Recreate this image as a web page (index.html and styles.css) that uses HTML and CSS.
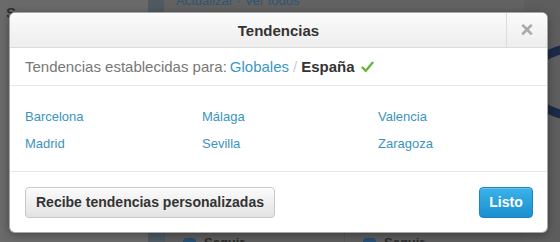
FILE: index.html
```
<!DOCTYPE html>
<html lang="es">
<head>
  <meta charset="UTF-8">
  <meta name="viewport" content="width=device-width,initial-scale=1">
  <title>Tendencias</title>
  <link rel="stylesheet" href="styles.css">
</head>
<body>

  <div class="page">
    <div class="side"><span class="side-mark">S</span></div>
    <div class="strip"></div>
    <div class="main">
      <div class="main-top">Actualizar · Ver todos</div>
      <div class="follow-row">
        <div class="follow-btn"><span class="bird"></span>Seguir</div>
        <div class="follow-btn"><span class="bird"></span>Seguir</div>
      </div>
    </div>
    <div class="aside">
      <div class="avatar"></div>
      <div class="aside-name">Ho</div>
      <div class="aside-sub">arl</div>
    </div>
  </div>

  <div class="modal">
    <div class="modal-header">
      <div></div>
      <div class="modal-title">Tendencias</div>
      <div class="modal-close">&times;</div>
    </div>

    <div class="modal-sub">
      Tendencias establecidas para:
      <a class="link" href="#">Globales</a>
      <span class="sep">/</span>
      <strong class="current">España</strong>
      <svg class="check" width="13" height="12" viewBox="0 0 13 12">
        <path d="M1.5 6.5 L4.8 9.8 L11.5 1.8" fill="none" stroke="#6bb33e" stroke-width="2.4" stroke-linecap="round" stroke-linejoin="round"/>
      </svg>
    </div>

    <div class="modal-body">
      <ul class="cities">
        <li><a href="#">Barcelona</a></li>
        <li><a href="#">Málaga</a></li>
        <li><a href="#">Valencia</a></li>
        <li><a href="#">Madrid</a></li>
        <li><a href="#">Sevilla</a></li>
        <li><a href="#">Zaragoza</a></li>
      </ul>
    </div>

    <div class="modal-footer">
      <button class="btn">Recibe tendencias personalizadas</button>
      <button class="btn primary">Listo</button>
    </div>
  </div>

</body>
</html>
```

FILE: styles.css
```
* { box-sizing: border-box; }

html, body {
  margin: 0;
  height: 242px;
  overflow: hidden;
}
body {
  background-color: #626262;
  font-family: 'Liberation Sans', Arial, sans-serif;
  color: #333;
}

/* dimmed page behind the dialog */
.page {
  display: grid;
  grid-template-columns: 148px 16px 1fr 52px;
  height: 242px;
}
.side {
  background-color: #6a6a6a;
  padding: 4px 0 0 6px;
}
.side-mark {
  font-weight: 700;
  font-size: 15px;
  color: #2e2e2e;
}
.strip { background-color: #4f5a63; }
.main {
  display: flex;
  flex-direction: column;
  justify-content: space-between;
  padding-left: 12px;
}
.main-top {
  margin-top: -7px;
  font-size: 13px;
  color: #2c5670;
}
.follow-row {
  display: flex;
  height: 10px;
  border-top: 1px solid #7a7a7a;
  margin-left: -12px;
}
.follow-btn {
  width: 180px;
  padding: 2px 0 0 18px;
  border-left: 1px solid #555;
  font-size: 13px;
  font-weight: 700;
  color: #2a2a2a;
  background-color: #5d5d5d;
}
.bird {
  display: inline-block;
  width: 13px;
  height: 9px;
  margin-right: 8px;
  border-radius: 6px 6px 2px 8px;
  background-color: #264f72;
}
.aside {
  background-color: #5e5e5e;
  padding-top: 44px;
}
.avatar {
  width: 100px;
  height: 76px;
  border: 9px solid #1d2a48;
  border-radius: 50%;
}
.aside-name {
  margin-top: 62px;
  font-size: 14px;
  font-weight: 700;
  color: #222;
}
.aside-sub {
  font-size: 11px;
  color: #444;
}

/* dialog */
.modal {
  position: absolute;
  top: 12px;
  left: 9px;
  width: 539px;
  background-color: #fff;
  border: 1px solid rgba(0, 0, 0, .35);
  border-radius: 6px;
  box-shadow: 0 2px 8px rgba(0, 0, 0, .35);
  overflow: hidden;
}
.modal-header {
  display: grid;
  grid-template-columns: 41px 1fr 41px;
  height: 35px;
  background: linear-gradient(#fbfbfb, #ededed);
  border-bottom: 1px solid #dcdcdc;
}
.modal-title {
  text-align: center;
  font-size: 15px;
  font-weight: 700;
  line-height: 35px;
  color: #333;
}
.modal-close {
  border-left: 1px solid #dcdcdc;
  text-align: center;
  font-size: 22px;
  font-weight: 700;
  line-height: 34px;
  color: #a8a8a8;
}

.modal-sub {
  display: flex;
  align-items: center;
  gap: 3px;
  height: 38px;
  padding: 0 15px;
  font-size: 15px;
  color: #777;
  border-bottom: 1px solid #e6e6e6;
}
.link {
  color: #3a98c4;
  text-decoration: none;
}
.sep { color: #ccc; margin: 0 1px; }
.current { color: #333; }
.check { margin-left: 3px; }

.modal-body {
  height: 86px;
  padding: 22px 15px 0;
  border-bottom: 1px solid #e6e6e6;
}
.cities {
  list-style: none;
  margin: 0;
  padding: 0;
  display: grid;
  grid-template-columns: 177px 176px 1fr;
  row-gap: 9px;
}
.cities li {
  font-size: 13px;
  line-height: 18px;
}
.cities a {
  color: #3a94c0;
  text-decoration: none;
}

.modal-footer {
  display: flex;
  justify-content: space-between;
  align-items: center;
  height: 60px;
  padding: 0 14px 0 15px;
}
.btn {
  height: 31px;
  padding: 0 10px;
  font-family: inherit;
  font-size: 14px;
  font-weight: 700;
  color: #333;
  background: linear-gradient(#fbfbfb, #e3e3e3);
  border: 1px solid #c8c8c8;
  border-radius: 4px;
  box-shadow: inset 0 1px 0 #fff;
}
.btn.primary {
  width: 54px;
  padding: 0;
  color: #fff;
  background: linear-gradient(#3bb2e8, #1b8fd0);
  border-color: #1a84c0;
  box-shadow: inset 0 1px 0 rgba(255, 255, 255, .25);
}
```
